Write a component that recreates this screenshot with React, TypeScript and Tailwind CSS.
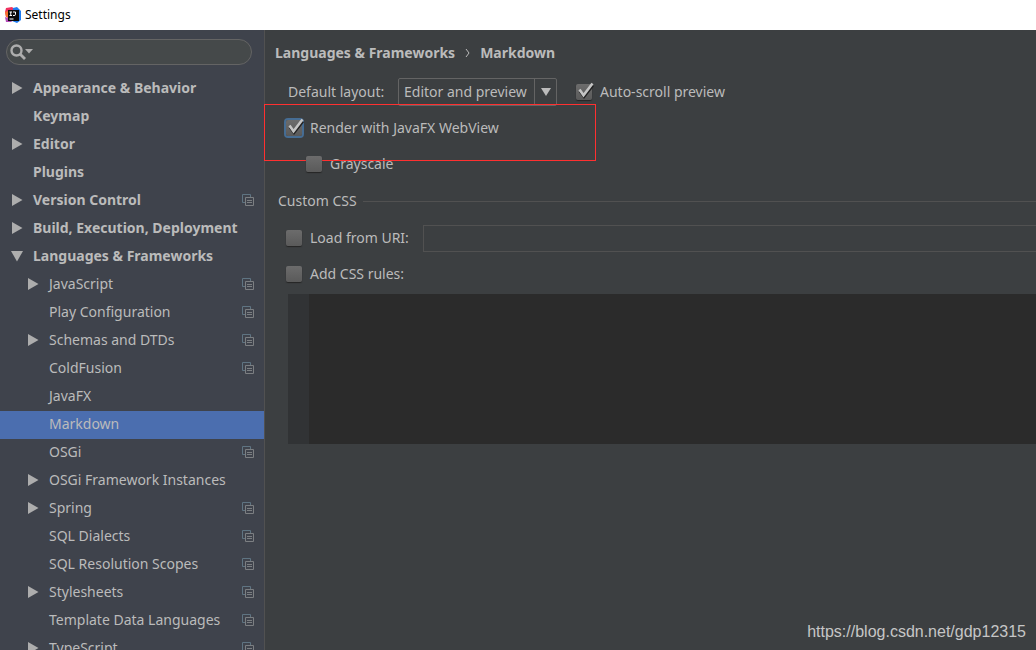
import { useId, useState } from "react";

type Item = { label: string; top?: boolean; arrow?: "right" | "down"; project?: boolean };

const items: Item[] = [
  { label: "Appearance & Behavior", top: true, arrow: "right" },
  { label: "Keymap", top: true },
  { label: "Editor", top: true, arrow: "right" },
  { label: "Plugins", top: true },
  { label: "Version Control", top: true, arrow: "right", project: true },
  { label: "Build, Execution, Deployment", top: true, arrow: "right" },
  { label: "Languages & Frameworks", top: true, arrow: "down" },
  { label: "JavaScript", arrow: "right", project: true },
  { label: "Play Configuration", project: true },
  { label: "Schemas and DTDs", arrow: "right", project: true },
  { label: "ColdFusion", project: true },
  { label: "JavaFX" },
  { label: "Markdown" },
  { label: "OSGi", project: true },
  { label: "OSGi Framework Instances", arrow: "right" },
  { label: "Spring", arrow: "right", project: true },
  { label: "SQL Dialects", project: true },
  { label: "SQL Resolution Scopes", project: true },
  { label: "Stylesheets", arrow: "right", project: true },
  { label: "Template Data Languages", project: true },
  { label: "TypeScript", arrow: "right", project: true },
];

function Arrow({ dir }: { dir?: "right" | "down" }) {
  return (
    <svg viewBox="0 0 12 12" className="size-3 shrink-0" fill="#adadad" aria-hidden="true">
      {dir === "right" && <path d="M1 0L11.5 6L1 12Z" />}
      {dir === "down" && <path d="M0 1H12L6 11.5Z" />}
    </svg>
  );
}

function ProjectIcon() {
  return (
    <svg viewBox="0 0 12 12" className="size-3 shrink-0" fill="none" aria-hidden="true">
      <path d="M3 8.5H.5V.5H8.5V3" stroke="#5f7482" />
      <path d="M3.5 3.5H11.5V11.5H3.5Z" stroke="#7c7f82" />
      <path d="M5 6.5H10M5 8.5H10" stroke="#7c7f82" />
    </svg>
  );
}

function AppLogo() {
  return (
    <svg viewBox="0 0 16 16" className="size-4 shrink-0" aria-hidden="true">
      <path d="M1 1L7 0L11 3L5 12L1 10L0 5Z" fill="#f0305f" />
      <path d="M0 5L3 4V10L1 10Z" fill="#f5722f" />
      <path d="M8 1L12 0L16 4V13L12 16L7 14Z" fill="#1f7bf0" />
      <path d="M0 10L5 12L7 15L1 15Z" fill="#b44cb8" />
      <rect x="3" y="3" width="11" height="11" fill="#0a0a0a" />
      <path d="M4.5 5H7M5.75 5V8.5M4.5 8.5H7M8 5H10.5V7.5Q10.5 8.5 9 8.5H8M4.5 12H8.5" stroke="#fff" fill="none" />
    </svg>
  );
}

function Check({ label, initial = false, focused = false }: { label: string; initial?: boolean; focused?: boolean }) {
  const id = useId();
  const [on, setOn] = useState(initial);
  return (
    <div className="flex items-center gap-2">
      <span className="relative flex size-4">
        <input
          id={id}
          type="checkbox"
          checked={on}
          onChange={(e) => setOn(e.target.checked)}
          className={
            "size-4 appearance-none rounded-xs bg-linear-to-b from-[#6c6c6c] to-[#5a5a5a] " +
            (focused ? "shadow-[0_0_0_2px_#466d94]" : "shadow-[0_1px_1px_#252525]")
          }
        />
        {on && (
          <svg viewBox="0 0 18 18" className="pointer-events-none absolute -top-0.5 left-0 size-4.5" fill="none" aria-hidden="true">
            <path d="M4 9.5L8 15L17 3.5" stroke="#222" strokeWidth="2.4" />
            <path d="M3.5 7.5L7.5 13.2L16.5 1.5" stroke="#c4c4c4" strokeWidth="2.6" />
          </svg>
        )}
      </span>
      <label htmlFor={id}>{label}</label>
    </div>
  );
}

export default function App() {
  const [selected, setSelected] = useState("Markdown");
  return (
    <div className="relative flex h-screen flex-col overflow-hidden bg-[#3c3f41] font-['Noto_Sans',sans-serif] text-sm text-[#bbbbbb]">
      <header className="flex h-[30px] shrink-0 items-center gap-1 bg-white pl-[5px] text-xs text-black">
        <AppLogo />
        <h1>Settings</h1>
      </header>
      <div className="flex min-h-0 flex-1">
        <aside className="flex w-[265px] shrink-0 flex-col overflow-hidden border-r border-[#515151] bg-[#3f434c]">
          <div className="mx-1.5 mt-[9px] mr-3 mb-2.5 flex h-[26px] shrink-0 items-center rounded-full border border-[#646464] bg-[#45494a] pl-[3px]">
            <svg viewBox="0 0 24 16" className="h-4 w-6 shrink-0" fill="none" aria-hidden="true">
              <circle cx="6.5" cy="6.5" r="5" stroke="#adadad" strokeWidth="2.4" />
              <path d="M10 10L15 15" stroke="#adadad" strokeWidth="2.8" />
              <path d="M15 5H23L19 9.5Z" fill="#adadad" />
            </svg>
            <input type="text" aria-label="Search settings" className="min-w-0 flex-1 bg-transparent px-1 outline-none" />
          </div>
          <nav>
            {items.map((it) => (
              <button
                key={it.label}
                type="button"
                onClick={() => setSelected(it.label)}
                className={
                  "flex h-7 w-full items-center gap-2.5 pr-2.5 pb-0.5 text-left " +
                  (it.top ? "pl-[11px] font-bold " : "pl-[27px] ") +
                  (selected === it.label ? "bg-[#4b6eaf]" : "")
                }
              >
                <Arrow dir={it.arrow} />
                <span className="flex-1 whitespace-nowrap">{it.label}</span>
                {it.project && <ProjectIcon />}
              </button>
            ))}
          </nav>
        </aside>
        <main className="min-w-0 flex-1 pt-[13px]">
          <h2 className="flex h-5 items-center gap-2.5 pl-2.5 font-bold">
            <span>Languages &amp; Frameworks</span>
            <svg viewBox="0 0 5 8" className="h-2 w-[5px]" fill="none" aria-hidden="true">
              <path d="M1 0L4 4L1 8" stroke="#bbbbbb" />
            </svg>
            <span>Markdown</span>
          </h2>
          <div className="mt-3.5 flex h-[30px] items-center pl-[23px]">
            <label htmlFor="layout" className="w-[110px]">Default layout:</label>
            <div className="relative flex h-7 w-[159px] rounded-xs border border-[#646464]">
              <select id="layout" className="w-full appearance-none bg-transparent pl-[5px] outline-none">
                <option>Editor and preview</option>
                <option>Editor only</option>
                <option>Preview only</option>
              </select>
              <span className="pointer-events-none absolute inset-y-0 right-0 flex w-[22px] items-center justify-center border-l border-[#646464]">
                <svg viewBox="0 0 10 8" className="h-2 w-2.5" fill="#bbbbbb" aria-hidden="true">
                  <path d="M0 0H10L5 8Z" />
                </svg>
              </span>
            </div>
            <div className="pl-[19px]">
              <Check label="Auto-scroll preview" initial />
            </div>
          </div>
          <div className="relative mt-[3px] flex h-9 items-center pl-[21px]">
            <Check label="Render with JavaFX WebView" initial focused />
            <div className="pointer-events-none absolute -top-1.5 -left-px h-[57px] w-[332px] border border-[#ff3030]" />
          </div>
          <div className="flex h-9 items-center pl-[41px]">
            <Check label="Grayscale" />
          </div>
          <fieldset>
            <legend className="flex h-[38px] w-full items-center gap-1.5 pl-[13px]">
              <span>Custom CSS</span>
              <span className="h-px flex-1 bg-[#515151]" />
            </legend>
            <div className="flex h-9 items-center gap-3.5 pl-[21px]">
              <Check label="Load from URI:" />
              <input type="text" aria-label="URI" className="h-[27px] min-w-0 flex-1 border border-r-0 border-[#515151] bg-transparent px-1.5 outline-none" />
            </div>
            <div className="flex h-9 items-center pl-[21px]">
              <Check label="Add CSS rules:" />
            </div>
            <div className="mt-0.5 ml-[23px] flex h-[150px] bg-[#2b2b2b]">
              <div className="w-[21px] bg-[#313335]" />
              <textarea aria-label="CSS rules" className="min-w-0 flex-1 resize-none bg-transparent px-1 outline-none" />
            </div>
          </fieldset>
        </main>
      </div>
      <p className="absolute right-2.5 bottom-1.5 font-['Liberation_Sans',sans-serif] text-base text-[#c6c6c6]">https://blog.csdn.net/gdp12315</p>
    </div>
  );
}
